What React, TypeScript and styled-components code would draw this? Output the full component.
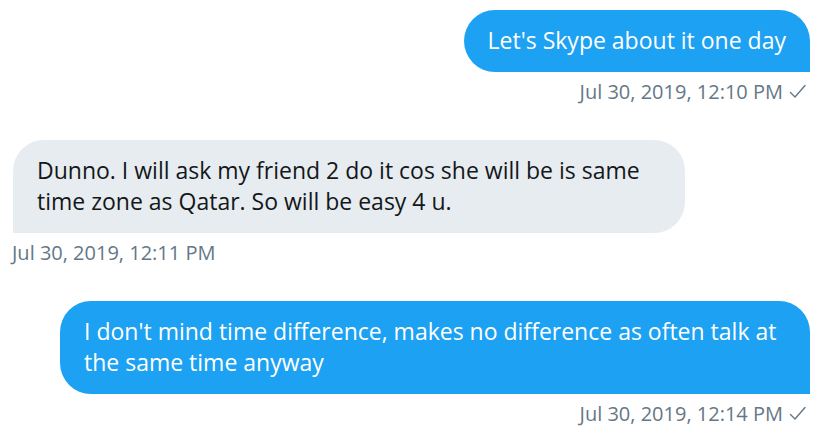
import React from 'react';
import styled, { createGlobalStyle } from 'styled-components';

const GlobalStyle = createGlobalStyle`
  html, body {
    margin: 0;
    padding: 0;
    background: #ffffff;
  }
  body {
    font-family: 'Open Sans', 'Noto Sans', sans-serif;
  }
`;

const Thread = styled.div`
  width: 822px;
  height: 440px;
  box-sizing: border-box;
  padding: 10px 12px 0 13px;
  display: flex;
  flex-direction: column;
  gap: 38px;
  overflow: hidden;
`;

type Side = 'sent' | 'received';

const Entry = styled.div<{ $side: Side }>`
  display: flex;
  flex-direction: column;
  align-items: ${(p) => (p.$side === 'sent' ? 'flex-end' : 'flex-start')};
  gap: 10px;
`;

// 말풍선: 보낸 쪽은 파란색, 받은 쪽은 회색
const Bubble = styled.div<{ $side: Side; $max: number }>`
  box-sizing: border-box;
  max-width: ${(p) => p.$max}px;
  padding: 15px 24px 16px 24px;
  font-size: 23px;
  line-height: 31px;
  border-radius: ${(p) => (p.$side === 'sent' ? '31px 31px 0 31px' : '31px 31px 31px 0')};
  background: ${(p) => (p.$side === 'sent' ? '#1DA1F2' : '#E6ECF0')};
  color: ${(p) => (p.$side === 'sent' ? '#ffffff' : '#14171A')};
`;

const Meta = styled.div<{ $side: Side }>`
  display: flex;
  align-items: center;
  gap: 6px;
  font-size: 20px;
  line-height: 20px;
  color: #657786;
  padding-right: ${(p) => (p.$side === 'sent' ? '4px' : '0')};
  margin-left: ${(p) => (p.$side === 'sent' ? '0' : '-1px')};
`;

const Check = () => (
  <svg width="17" height="16" viewBox="0 0 17 16" fill="none">
    <polyline
      points="1.5,8.5 6,13 16,1.5"
      stroke="#657786"
      strokeWidth="1.4"
      strokeLinejoin="round"
      strokeLinecap="round"
    />
  </svg>
);

const messages: { side: Side; text: string; time: string; max: number }[] = [
  { side: 'sent', text: "Let's Skype about it one day", time: 'Jul 30, 2019, 12:10 PM', max: 750 },
  {
    side: 'received',
    text: 'Dunno. I will ask my friend 2 do it cos she will be is same time zone as Qatar. So will be easy 4 u.',
    time: 'Jul 30, 2019, 12:11 PM',
    max: 672,
  },
  {
    side: 'sent',
    text: "I don't mind time difference, makes no difference as often talk at the same time anyway",
    time: 'Jul 30, 2019, 12:14 PM',
    max: 750,
  },
];

const App: React.FC = () => (
  <>
    <GlobalStyle />
    <Thread>
      {messages.map((m, i) => (
        <Entry key={i} $side={m.side}>
          <Bubble $side={m.side} $max={m.max}>
            {m.text}
          </Bubble>
          <Meta $side={m.side}>
            {m.time}
            {m.side === 'sent' && <Check />}
          </Meta>
        </Entry>
      ))}
    </Thread>
  </>
);

export default App;
